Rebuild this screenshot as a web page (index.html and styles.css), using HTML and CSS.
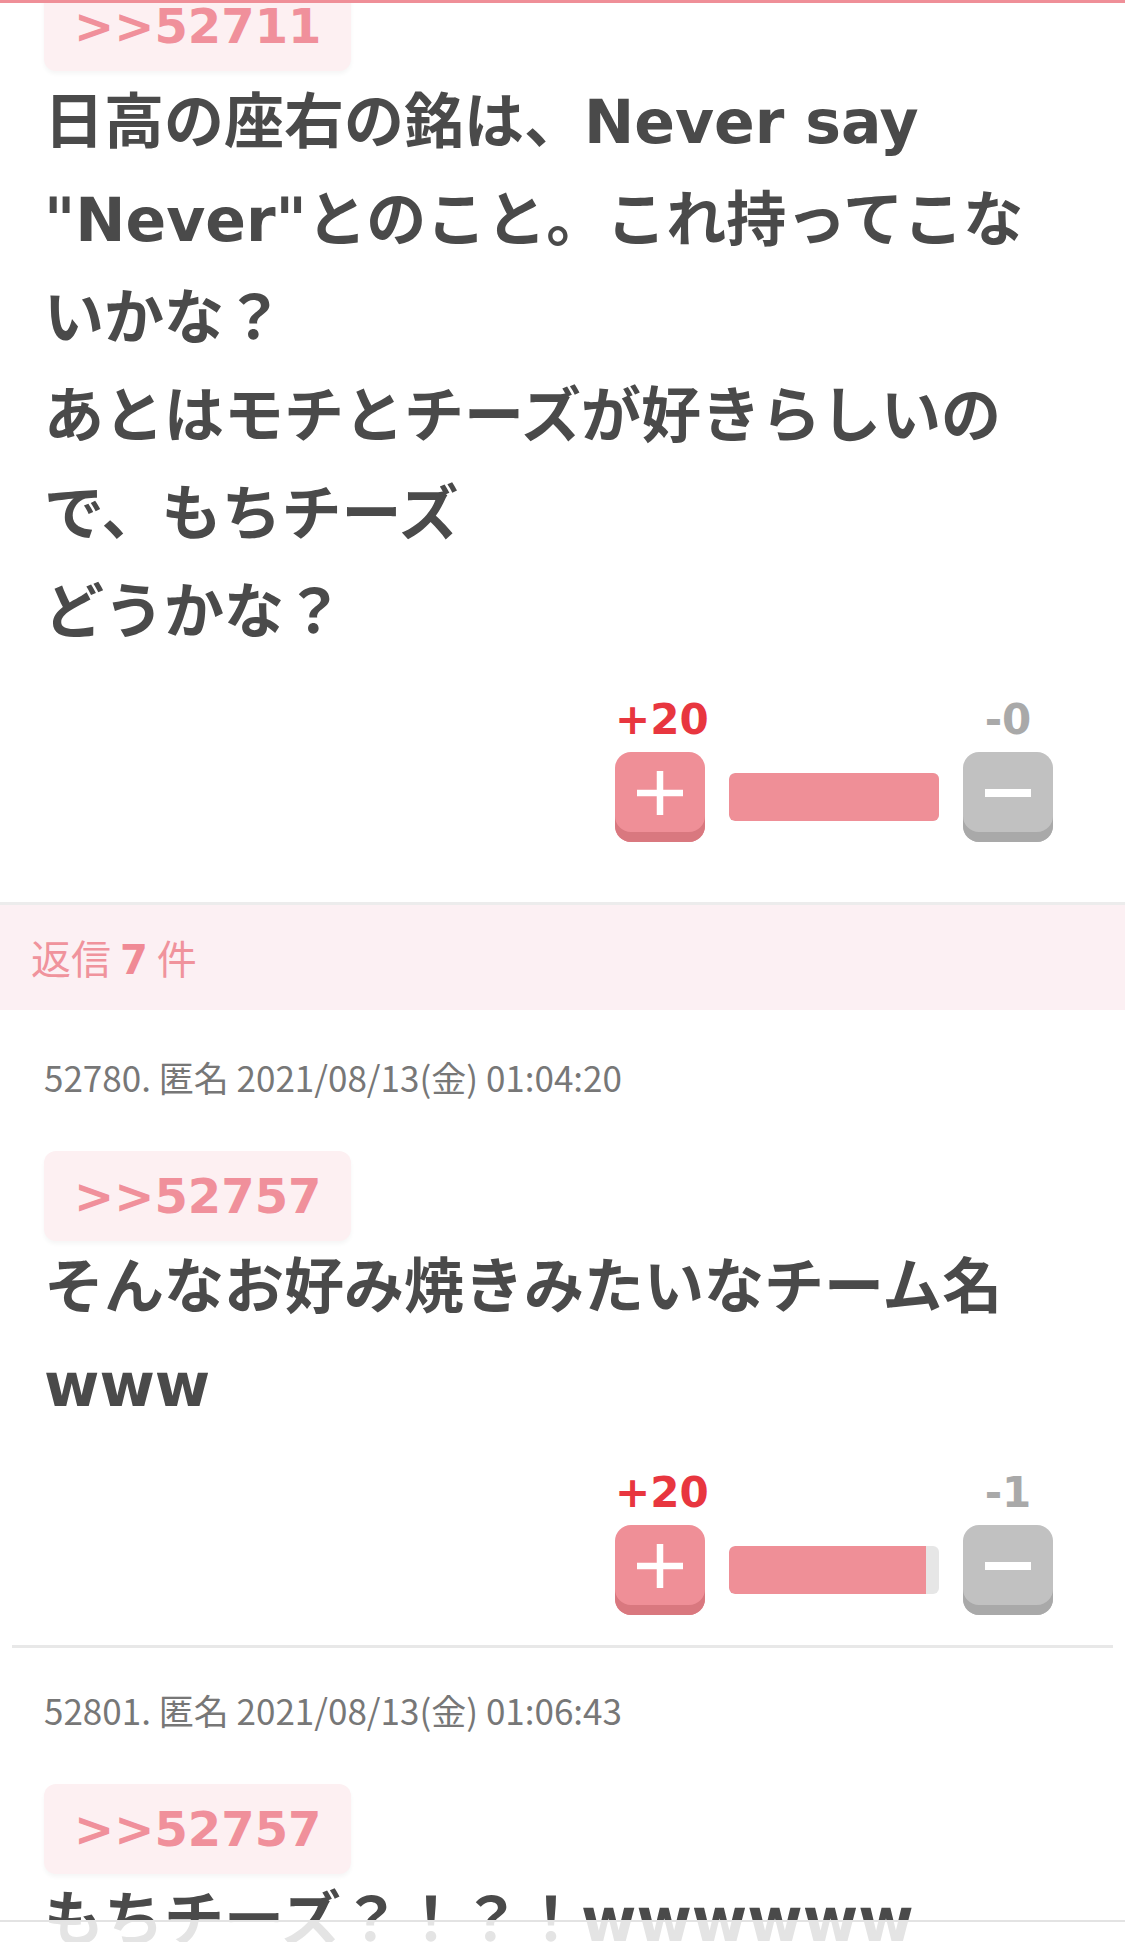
FILE: index.html
```html
<!DOCTYPE html>
<html lang="ja">
<head>
    <meta charset="UTF-8">
    <meta name="viewport" content="width=device-width, initial-scale=1.0">
    <title>コメント</title>
    <link rel="stylesheet" href="styles.css">
</head>
<body>

    <div class="top-line"></div>

    <main class="thread">
        <article class="post main-post">
            <a class="anchor">&gt;&gt;52711</a>
            <p class="body">日高の座右の銘は、Never say<br>"Never"とのこと。これ持ってこな<br>いかな？<br>あとはモチとチーズが好きらしいの<br>で、もちチーズ<br>どうかな？</p>
            <div class="vote-wrap">
                <div class="vote">
                    <span class="count count-plus">+20</span>
                    <span class="count count-minus">-0</span>
                    <button class="btn btn-plus">
                        <svg width="48" height="46" viewBox="0 0 48 46"><path d="M24 1v44M1 23h46" stroke="#fff" stroke-width="6.5"/></svg>
                    </button>
                    <div class="bar"><div class="fill" style="width:100%"></div></div>
                    <button class="btn btn-minus">
                        <svg width="46" height="10" viewBox="0 0 46 10"><path d="M0 5h46" stroke="#fff" stroke-width="8"/></svg>
                    </button>
                </div>
            </div>
        </article>

        <div class="reply-head">返信 <b>7</b> 件</div>

        <article class="post reply">
            <div class="meta">52780. 匿名 2021/08/13(金) 01:04:20</div>
            <a class="anchor">&gt;&gt;52757</a>
            <p class="body">そんなお好み焼きみたいなチーム名<br>www</p>
            <div class="vote-wrap">
                <div class="vote">
                    <span class="count count-plus">+20</span>
                    <span class="count count-minus">-1</span>
                    <button class="btn btn-plus">
                        <svg width="48" height="46" viewBox="0 0 48 46"><path d="M24 1v44M1 23h46" stroke="#fff" stroke-width="6.5"/></svg>
                    </button>
                    <div class="bar"><div class="fill" style="width:94%"></div></div>
                    <button class="btn btn-minus">
                        <svg width="46" height="10" viewBox="0 0 46 10"><path d="M0 5h46" stroke="#fff" stroke-width="8"/></svg>
                    </button>
                </div>
            </div>
        </article>

        <article class="post reply">
            <div class="meta">52801. 匿名 2021/08/13(金) 01:06:43</div>
            <a class="anchor">&gt;&gt;52757</a>
            <p class="body">もちチーズ？！？！wwwwww</p>
        </article>
    </main>

    <div class="bottom-bar"></div>

</body>
</html>
```

FILE: styles.css
```css
body {
    margin: 0;
    background: #fff;
    font-family: "DejaVu Sans", "Noto Sans CJK JP", sans-serif;
    color: #4a4a4a;
}
.top-line {
    position: fixed;
    top: 0;
    left: 0;
    right: 0;
    height: 3px;
    background: #ef8f98;
    z-index: 10;
}
.thread {
    margin-top: -19px;
}
.post {
    padding: 0 44px;
}
.main-post {
    padding-bottom: 60px;
}
.reply {
    margin: 0 12px;
    padding: 40px 32px 30px;
    border-bottom: 3px solid #e8e8e8;
}
.reply + .reply {
    padding-top: 35px;
}
.anchor {
    display: inline-block;
    padding: 15px 30px;
    line-height: 60px;
    font-size: 48px;
    font-weight: bold;
    color: #f0909b;
    background: #fdf0f2;
    border-radius: 12px;
    box-shadow: 0 3px 4px rgba(0, 0, 0, 0.04);
}
.body {
    margin: 2px 0 0;
    font-size: 60px;
    line-height: 98px;
    font-weight: bold;
    color: #4a4a4a;
}
.reply .body {
    margin-top: -3px;
}
.meta {
    font-family: "Noto Sans CJK JP", sans-serif;
    font-size: 35px;
    line-height: 54px;
    color: #777;
    margin-bottom: 47px;
}
/* Votes */
.vote-wrap {
    display: flex;
    justify-content: flex-end;
    margin-top: 35px;
    margin-right: 28px;
}
.vote {
    display: grid;
    grid-template-columns: 90px 210px 90px;
    grid-template-areas:
        "cp . cm"
        "bp bar bm";
    column-gap: 24px;
    row-gap: 8px;
}
.count {
    font-size: 42px;
    line-height: 48px;
    font-weight: bold;
    text-align: center;
    white-space: nowrap;
}
.count-plus {
    grid-area: cp;
    color: #e8363f;
}
.count-minus {
    grid-area: cm;
    color: #a9a9a9;
}
.btn {
    width: 90px;
    height: 90px;
    border: 0;
    border-radius: 16px;
    padding: 0 0 8px;
    display: flex;
    align-items: center;
    justify-content: center;
    cursor: pointer;
}
.btn-plus {
    grid-area: bp;
    background: #ef8f97;
    box-shadow: inset 0 -10px 0 #d9787f;
}
.btn-minus {
    grid-area: bm;
    background: #c1c1c1;
    box-shadow: inset 0 -10px 0 #a9a9a9;
}
.bar {
    grid-area: bar;
    align-self: center;
    height: 48px;
    background: #e6e6e6;
    border-radius: 6px;
    overflow: hidden;
}
.fill {
    height: 100%;
    background: #ef8f97;
    border-radius: 6px 0 0 6px;
}
/* Reply header */
.reply-head {
    border-top: 3px solid #ececec;
    background: #fcf0f3;
    height: 105px;
    line-height: 105px;
    padding-left: 31px;
    font-family: "Noto Sans CJK JP", sans-serif;
    font-size: 40px;
    color: #f0939c;
}
.reply-head b {
    font-family: "DejaVu Sans", sans-serif;
    color: #f08a95;
}
.bottom-bar {
    position: fixed;
    left: 0;
    right: 0;
    bottom: 0;
    height: 20px;
    border-top: 2px solid #e3e3e3;
    background: rgba(255, 255, 255, 0.85);
}
```
